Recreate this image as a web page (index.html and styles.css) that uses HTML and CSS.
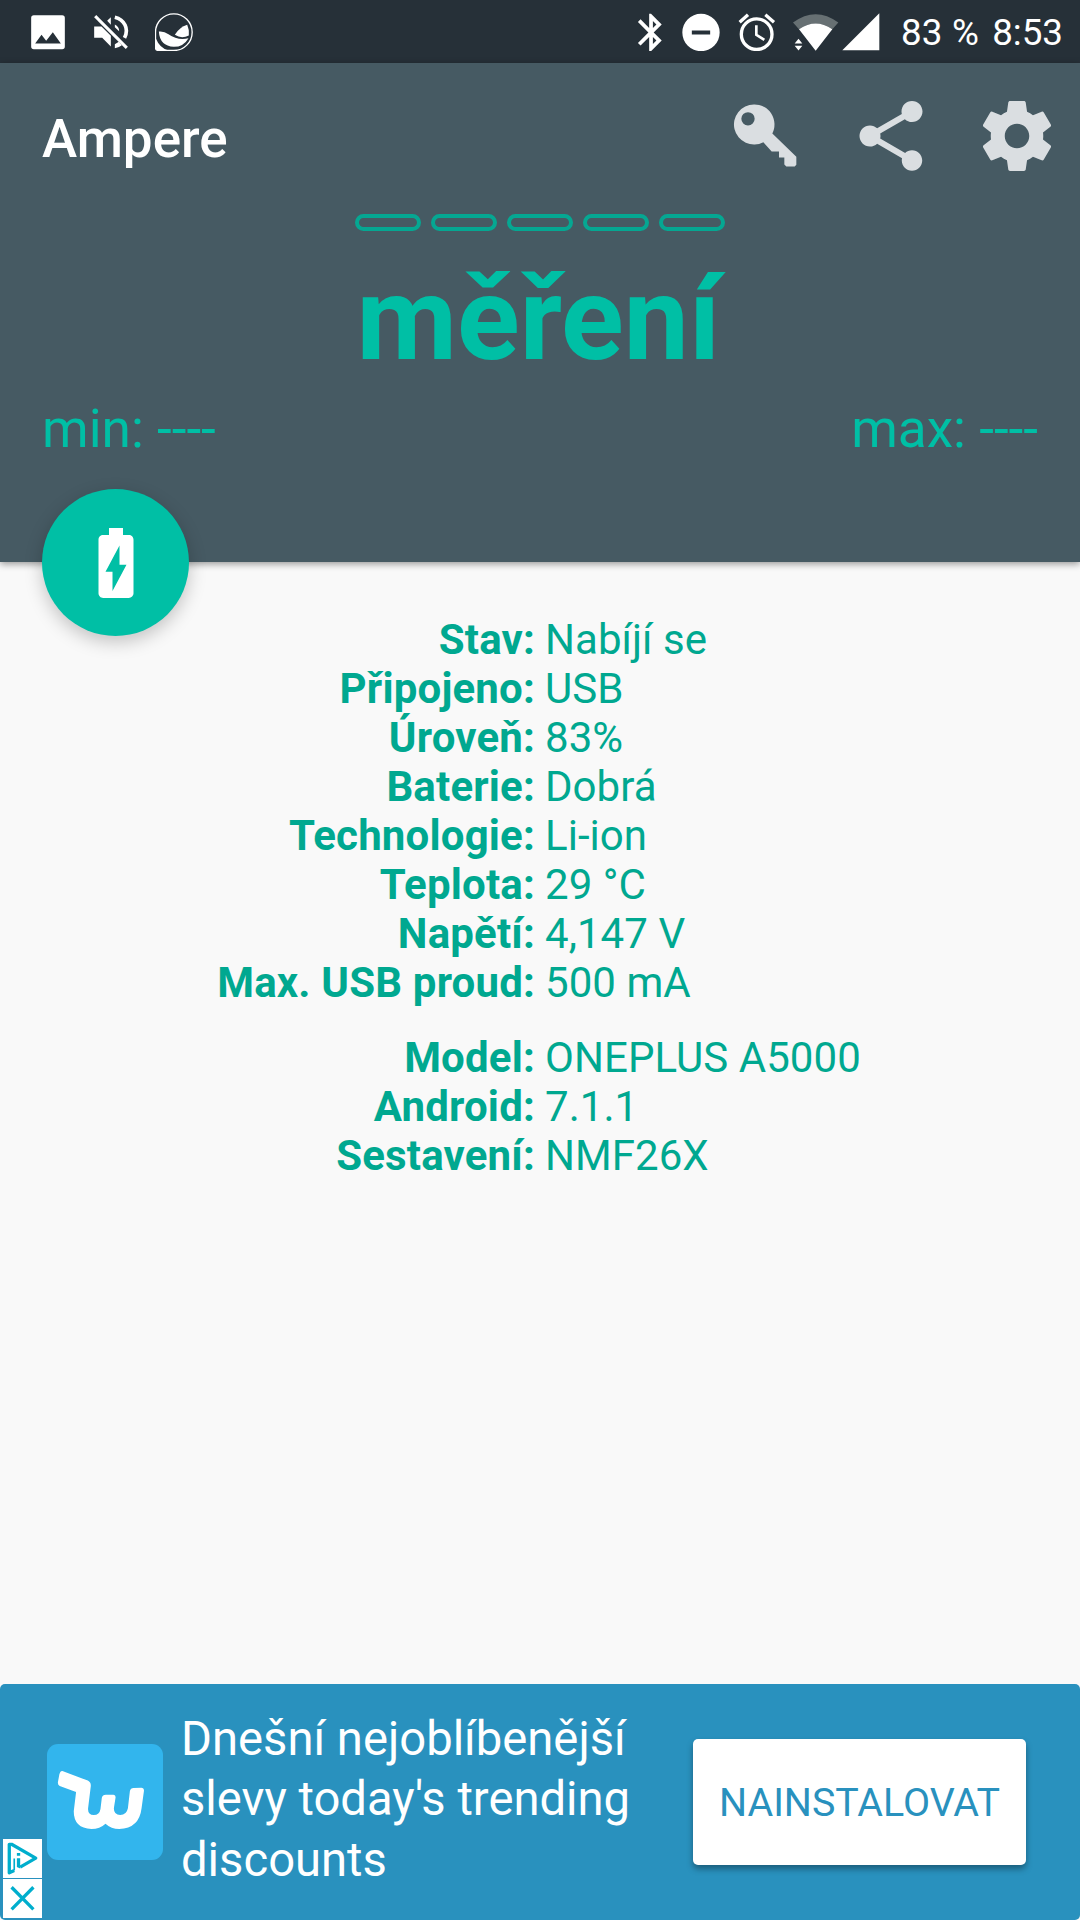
FILE: index.html
```html
<!DOCTYPE html>
<html lang="cs">
<head>
    <meta charset="UTF-8">
    <meta name="viewport" content="width=device-width, initial-scale=1.0">
    <title>Ampere</title>
    <link rel="stylesheet" href="styles.css">
</head>
<body>

    <div class="status-bar">
        <div class="notifications">
            <svg class="status-icon" viewBox="85.5 37.5 114 114">
                <path fill-rule="evenodd" d="M100 44H185Q193 44 193 52V138Q193 146 185 146H100Q92 146 92 138V52Q92 44 100 44ZM104 129H181L157 95L137 121L123 103Z"/>
            </svg>
            <svg class="status-icon" viewBox="274.5 37.5 114 114">
                <path d="M281 78H303L331 106V138L305 112H281ZM320 61L331 50V73ZM343 72Q356 79 356 92L343 80ZM343 131L355 124L364 134Q354 142 343 143Z"/>
                <path class="line" stroke-width="11" d="M343 50C372 57 386 85 372 112"/>
                <path class="line" stroke-width="9" d="M284 47L379 142"/>
            </svg>
            <svg class="status-icon" viewBox="463.5 37.5 114 114">
                <path class="line" stroke-width="4" d="M465 95A55 55 0 1 1 520 150H474Q465 150 465 141Z"/>
                <path d="M465 112V141Q465 150 474 150H504Q478 144 465 112Z"/>
                <path d="M475 93Q490 91 504 101Q532 121 564 113Q549 139 520 139Q478 137 475 93Z"/>
                <path d="M523 103Q537 80 560 73Q567 88 565 105Q543 116 523 103Z"/>
            </svg>
        </div>
        <div class="system">
            <svg class="status-icon bluetooth" viewBox="1.3 1.6 20.3 20.3">
                <path d="M17.71 7.71L12 2h-1v7.59L6.41 5 5 6.41 10.59 12 5 17.59 6.41 19 11 14.41V22h1l5.71-5.71-4.3-4.29 4.3-4.29zM13 5.83l1.88 1.88L13 9.59V5.83zm1.88 10.46L13 18.17v-3.76l1.88 1.88z"/>
            </svg>
            <svg class="status-icon dnd" viewBox="186.5 37.5 114 114">
                <path fill-rule="evenodd" d="M243.5 40A56 56 0 1 0 243.5 152A56 56 0 1 0 243.5 40ZM216 90H271V102H216Z"/>
            </svg>
            <svg class="status-icon alarm" viewBox="355 37.5 114 114">
                <circle class="line" stroke-width="10" cx="411" cy="101" r="46"/>
                <path class="line" stroke-width="10" d="M360 65L385 43M437 43L463 65"/>
                <path class="line" stroke-width="8" d="M410 74V103L434 118"/>
            </svg>
            <svg class="status-icon wifi" viewBox="516 37.5 141 114">
                <path class="dim" d="M519 66Q587 16 655 66L637 86Q587 52 537 86Z"/>
                <path d="M537 86Q587 52 637 86L587 151ZM535.5 115L547 129H524ZM524 136H547L535.5 150Z"/>
            </svg>
            <svg class="status-icon signal" viewBox="667 37.5 114 114">
                <path d="M668 149L779 38V149Z"/>
            </svg>
            <span class="battery">83 %</span>
            <span class="clock">8:53</span>
        </div>
    </div>

    <div class="header">
        <div class="toolbar">
            <h1 class="title">Ampere</h1>
            <div class="actions">
                <svg class="action" viewBox="69 43.5 252 252">
                    <path fill-rule="evenodd" d="M162 75A60 60 0 1 0 190 188L215 216H237V234H253V255L259 261H284L289 256V232L217 162A60 60 0 0 0 162 75ZM144 98A20 20 0 1 1 144 138A20 20 0 1 1 144 98Z"/>
                </svg>
                <svg class="action" viewBox="0 0 24 24">
                    <path d="M18 16.08c-.76 0-1.44.3-1.96.77L8.91 12.7c.05-.23.09-.46.09-.7s-.04-.47-.09-.7l7.05-4.11c.54.5 1.25.81 2.04.81 1.66 0 3-1.34 3-3s-1.34-3-3-3-3 1.34-3 3c0 .24.04.47.09.7L8.04 9.81C7.5 9.31 6.79 9 6 9c-1.66 0-3 1.34-3 3s1.34 3 3 3c.79 0 1.5-.31 2.04-.81l7.12 4.16c-.05.21-.08.43-.08.65 0 1.61 1.31 2.92 2.92 2.92 1.61 0 2.92-1.31 2.92-2.92s-1.31-2.92-2.92-2.92z"/>
                </svg>
                <svg class="action" viewBox="0 0 24 24">
                    <path d="M19.43 12.98c.04-.32.07-.64.07-.98s-.03-.66-.07-.98l2.11-1.65c.19-.15.24-.42.12-.64l-2-3.46c-.12-.22-.39-.3-.61-.22l-2.49 1c-.52-.4-1.08-.73-1.69-.98l-.38-2.65C14.46 2.18 14.25 2 14 2h-4c-.25 0-.46.18-.49.42l-.38 2.65c-.61.25-1.17.59-1.69.98l-2.49-1c-.23-.09-.49 0-.61.22l-2 3.46c-.13.22-.07.49.12.64l2.11 1.65c-.04.32-.07.65-.07.98s.03.66.07.98l-2.11 1.65c-.19.15-.24.42-.12.64l2 3.46c.12.22.39.3.61.22l2.49-1c.52.4 1.08.73 1.69.98l.38 2.65c.03.24.24.42.49.42h4c.25 0 .46-.18.49-.42l.38-2.65c.61-.25 1.17-.59 1.69-.98l2.49 1c.23.09.49 0 .61-.22l2-3.46c.12-.22.07-.49-.12-.64l-2.11-1.65zM12 15.5c-1.93 0-3.5-1.57-3.5-3.5s1.57-3.5 3.5-3.5 3.5 1.57 3.5 3.5-1.57 3.5-3.5 3.5z"/>
                </svg>
            </div>
        </div>

        <div class="progress">
            <span class="segment"></span>
            <span class="segment"></span>
            <span class="segment"></span>
            <span class="segment"></span>
            <span class="segment"></span>
        </div>
        <div class="current">měření</div>
        <div class="range">
            <span>min: ----</span>
            <span>max: ----</span>
        </div>

        <!-- Floating button, overlaps the lower edge of the header -->
        <div class="fab">
            <svg class="fab-icon" viewBox="0 0 24 24">
                <path d="M15.67 4H14V2h-4v2H8.33C7.6 4 7 4.6 7 5.33v15.33C7 21.4 7.6 22 8.33 22h7.33c.74 0 1.34-.6 1.34-1.33V5.33C17 4.6 16.4 4 15.67 4zM11 20v-5.5H9L13 7v5.5h2L11 20z"/>
            </svg>
        </div>
    </div>

    <div class="content">
        <dl class="info">
            <dt>Stav:</dt><dd>Nabíjí se</dd>
            <dt>Připojeno:</dt><dd>USB</dd>
            <dt>Úroveň:</dt><dd>83%</dd>
            <dt>Baterie:</dt><dd>Dobrá</dd>
            <dt>Technologie:</dt><dd>Li-ion</dd>
            <dt>Teplota:</dt><dd>29 °C</dd>
            <dt>Napětí:</dt><dd>4,147 V</dd>
            <dt>Max. USB proud:</dt><dd>500 mA</dd>
        </dl>
        <dl class="info">
            <dt>Model:</dt><dd>ONEPLUS A5000</dd>
            <dt>Android:</dt><dd>7.1.1</dd>
            <dt>Sestavení:</dt><dd>NMF26X</dd>
        </dl>
    </div>

    <div class="ad">
        <svg class="ad-logo" viewBox="142 253.5 347 347">
            <path d="M188 334L264 363Q274 368 273 380L265 445Q263 466 282 466Q299 466 302 448L306 414Q308 405 318 405H341Q348 406 347 414L342 446Q342 466 361 466Q380 466 384 446L390 394Q392 385 401 385L424 384Q433 385 432 394L425 445Q418 506 358 508Q334 508 317 492Q300 508 275 508Q222 506 222 455L229 397L180 379Q173 376 175 366L179 344Q182 333 188 334Z"/>
        </svg>
        <p class="ad-text">Dnešní nejoblíbenější slevy today's trending discounts</p>
        <button class="ad-button">NAINSTALOVAT</button>
        <div class="ad-choices">
            <svg class="choice" viewBox="8 537 118 118">
                <path class="stroke" d="M42 632L27 639V553H34L107 595L60 622"/>
                <path class="fill" d="M50 595H60V626L50 622ZM50 579H60V588H50Z"/>
                <path class="stroke thin" d="M42 596V632"/>
            </svg>
            <svg class="choice" viewBox="8 655 118 118">
                <path class="stroke" d="M34 680L100 747M100 680L34 747"/>
            </svg>
        </div>
    </div>

</body>
</html>
```
FILE: styles.css
```css
* {
    box-sizing: border-box;
}

body {
    display: flex;
    flex-direction: column;
    height: 1920px;
    margin: 0;
    background: #f9f9f9;
    font-family: Roboto, sans-serif;
    overflow: hidden;
}

svg {
    display: block;
    flex: none;
}

/* Status bar */
.status-bar {
    display: flex;
    justify-content: space-between;
    align-items: center;
    height: 63px;
    padding: 0 17px 0 28.5px;
    background: #263038;
    color: #fff;
    font-size: 36.75px;
}

.notifications {
    display: flex;
    gap: 25px;
}

.system {
    display: flex;
    align-items: center;
    white-space: nowrap;
}

.status-icon {
    width: 38px;
    height: 38px;
    fill: #fff;
}

.status-icon .line {
    fill: none;
    stroke: #fff;
}

.status-icon .dim {
    fill: #677073;
}

.bluetooth {
    margin-right: 13px;
}

.dnd {
    margin-right: 18px;
}

.alarm {
    margin-right: 16px;
}

.wifi {
    width: 47px;
    margin-right: 3px;
}

.signal {
    margin-right: 21px;
}

.battery {
    margin-right: 13px;
    letter-spacing: 0.2px;
}

.battery,
.clock {
    padding-top: 2px;
}

/* Header */
.header {
    position: relative;
    height: 499px;
    background: #465a63;
    box-shadow: 0 2px 7px rgba(0, 0, 0, 0.4);
}

.toolbar {
    display: flex;
    justify-content: space-between;
    align-items: center;
    height: 147px;
    padding: 0 21px 0 42px;
}

.title {
    margin: 5px 0 0;
    color: #fff;
    font-size: 53px;
    font-weight: 500;
}

.actions {
    display: flex;
    gap: 42px;
    margin-bottom: 2px;
}

.action {
    width: 84px;
    height: 84px;
    fill: #dadee1;
}

.progress {
    display: flex;
    justify-content: center;
    gap: 10px;
    margin-top: 4px;
}

.segment {
    width: 66px;
    height: 17px;
    border: 4px solid #05a792;
    border-radius: 9px;
}

.current {
    margin-top: 20px;
    padding-right: 3px;
    color: #00bfa5;
    font-size: 116px;
    font-weight: 700;
    line-height: 136px;
    text-align: center;
}

.range {
    display: flex;
    justify-content: space-between;
    margin-top: 11px;
    padding: 0 42px;
    color: #00bfa5;
    font-size: 53.2px;
    line-height: 62px;
}

.fab {
    position: absolute;
    left: 42px;
    bottom: -74px;
    display: flex;
    justify-content: center;
    align-items: center;
    width: 147px;
    height: 147px;
    border-radius: 50%;
    background: #00bfa5;
    box-shadow: 0 6px 18px rgba(0, 0, 0, 0.22);
}

.fab-icon {
    width: 84px;
    height: 84px;
    fill: #fff;
}

/* Battery and device info */
.content {
    flex: 1;
    padding-top: 53px;
}

.info {
    display: grid;
    grid-template-columns: 535px 1fr;
    column-gap: 10px;
    margin: 0 0 26px;
    color: #00a890;
    font-size: 42px;
    line-height: 49px;
}

.info dt {
    font-weight: 700;
    letter-spacing: 0.18px;
    text-align: right;
}

.info dd {
    margin: 0;
    letter-spacing: 0.05px;
}

/* Ad banner */
.ad {
    position: relative;
    display: flex;
    align-items: center;
    height: 236px;
    padding: 0 54px 0 47px;
    border-radius: 5px;
    background: #2991be;
}

.ad-logo {
    width: 116px;
    height: 116px;
    border-radius: 11px;
    background: #32b5ed;
    fill: #fff;
}

.ad-text {
    width: 480px;
    margin: 0 auto 5px 18px;
    color: #fff;
    font-size: 47.2px;
    line-height: 60.4px;
}

.ad-button {
    width: 333px;
    height: 126px;
    padding: 0;
    border: 0;
    border-radius: 5px;
    background: #fff;
    box-shadow: 0 4px 6px rgba(0, 0, 0, 0.35);
    color: #2991be;
    font-family: inherit;
    font-size: 39.4px;
}

.ad-choices {
    position: absolute;
    left: 3px;
    bottom: 2px;
    display: grid;
    gap: 1px;
}

.choice {
    width: 39px;
    height: 39px;
    background: #fff;
}

.choice .stroke {
    fill: none;
    stroke: #00aecd;
    stroke-width: 10;
    stroke-linejoin: round;
}

.choice .thin {
    stroke-width: 5;
}

.choice .fill {
    fill: #00aecd;
}
```
